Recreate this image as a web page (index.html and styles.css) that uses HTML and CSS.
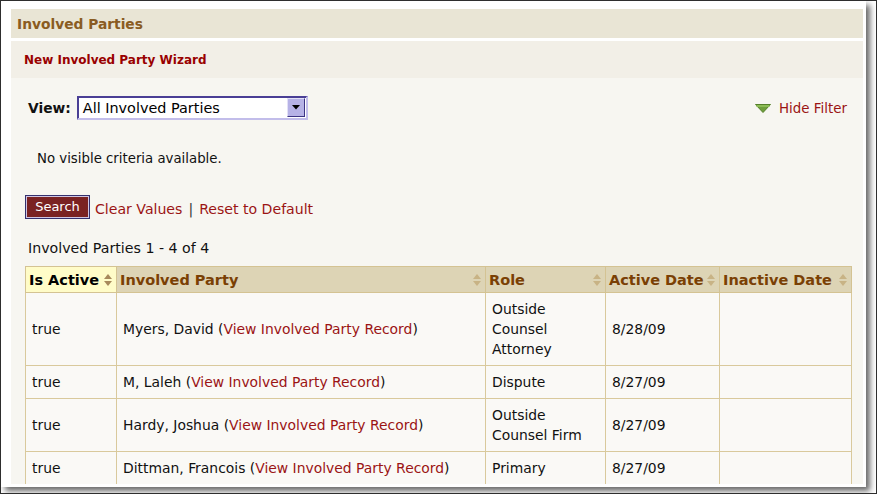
FILE: index.html
```html
<!DOCTYPE html>
<html>
<head>
<meta charset="utf-8">
<link rel="stylesheet" href="styles.css">
</head>
<body>
<div class="frame">
  <div class="panel">
    <div class="content">
      <div class="title">Involved Parties</div>
      <div class="wizard">New Involved Party Wizard</div>
      <div class="main">
        <div class="view-row">
          <div class="view-left">
            <span class="view-label">View:</span>
            <div class="select">
              <span class="select-text">All Involved Parties</span>
              <span class="select-btn"><svg width="8" height="5" viewBox="0 0 8 5"><polygon points="0,0 8,0 4,4.5" fill="#000"/></svg></span>
            </div>
          </div>
          <div class="hide-filter">
            <svg class="tri" width="16" height="9" viewBox="0 0 16 9"><polygon points="0.5,0.5 15.5,0.5 8,8.5" fill="#6f9f3c" stroke="#557f2a" stroke-width="1"/><rect x="1.5" y="1" width="13" height="2" fill="#8cbc55"/></svg>
            <a class="link">Hide Filter</a>
          </div>
        </div>
        <div class="criteria">No visible criteria available.</div>
        <div class="search-row">
          <button class="search-btn">Search</button>
          <a class="link">Clear Values</a><span class="sep">|</span><a class="link">Reset to Default</a>
        </div>
        <div class="count">Involved Parties 1 - 4 of 4</div>
        <table class="grid">
          <colgroup>
            <col class="c1"><col class="c2"><col class="c3"><col class="c4"><col class="c5">
          </colgroup>
          <thead>
            <tr>
              <th class="sorted"><div class="th-in"><span>Is Active</span><svg class="sort" width="8" height="12" viewBox="0 0 8 12"><polygon points="4,0 8,5 0,5" /><polygon points="0,7 8,7 4,12" /></svg></div></th>
              <th><div class="th-in"><span>Involved Party</span><svg class="sort" width="8" height="12" viewBox="0 0 8 12"><polygon points="4,0 8,5 0,5" /><polygon points="0,7 8,7 4,12" /></svg></div></th>
              <th><div class="th-in"><span>Role</span><svg class="sort" width="8" height="12" viewBox="0 0 8 12"><polygon points="4,0 8,5 0,5" /><polygon points="0,7 8,7 4,12" /></svg></div></th>
              <th><div class="th-in"><span>Active Date</span><svg class="sort" width="8" height="12" viewBox="0 0 8 12"><polygon points="4,0 8,5 0,5" /><polygon points="0,7 8,7 4,12" /></svg></div></th>
              <th><div class="th-in"><span>Inactive Date</span><svg class="sort" width="8" height="12" viewBox="0 0 8 12"><polygon points="4,0 8,5 0,5" /><polygon points="0,7 8,7 4,12" /></svg></div></th>
            </tr>
          </thead>
          <tbody>
            <tr>
              <td>true</td>
              <td>Myers, David (<a class="link">View Involved Party Record</a>)</td>
              <td>Outside Counsel Attorney</td>
              <td>8/28/09</td>
              <td></td>
            </tr>
            <tr>
              <td>true</td>
              <td>M, Laleh (<a class="link">View Involved Party Record</a>)</td>
              <td>Dispute</td>
              <td>8/27/09</td>
              <td></td>
            </tr>
            <tr>
              <td>true</td>
              <td>Hardy, Joshua (<a class="link">View Involved Party Record</a>)</td>
              <td>Outside Counsel Firm</td>
              <td>8/27/09</td>
              <td></td>
            </tr>
            <tr>
              <td>true</td>
              <td>Dittman, Francois (<a class="link">View Involved Party Record</a>)</td>
              <td>Primary</td>
              <td>8/27/09</td>
              <td></td>
            </tr>
          </tbody>
        </table>
      </div>
    </div>
  </div>
</div>
</body>
</html>
```

FILE: styles.css
```css
html, body {
  margin: 0;
  padding: 0;
  background: #ffffff;
}

body {
  font-family: "DejaVu Sans", Verdana, sans-serif;
  color: #111111;
  font-size: 14px;
}

.frame {
  width: 877px;
  height: 494px;
  box-sizing: border-box;
  border: 1px solid #2e2e2e;
  background: #ffffff;
  overflow: hidden;
}

.panel {
  width: 865px;
  height: 486px;
  box-sizing: border-box;
  padding: 8px 3px 3px 10px;
  background: #ffffff;
  box-shadow: 4px 4px 6px rgba(0, 0, 0, 0.6);
}

.content {
  width: 852px;
  height: 475px;
  display: flex;
  flex-direction: column;
  overflow: hidden;
}

.title {
  height: 29px;
  flex: none;
  display: flex;
  align-items: center;
  padding-left: 6px;
  background: #e9e5d5;
  color: #8a5c22;
  font-weight: bold;
  font-size: 13.8px;
}

.wizard {
  margin-top: 3px;
  height: 37px;
  flex: none;
  display: flex;
  align-items: center;
  padding-left: 13px;
  background: #f2efe7;
  color: #990000;
  font-weight: bold;
  font-size: 12px;
}

.main {
  flex: 1;
  background: #f7f6f1;
  padding: 0 12px 0 14px;
}

.view-row {
  margin-top: 18px;
  height: 24px;
  display: flex;
  align-items: center;
  justify-content: space-between;
}

.view-left {
  display: flex;
  align-items: center;
  padding-left: 3px;
}

.view-label {
  font-weight: bold;
  font-size: 13.8px;
  margin-right: 6px;
}

.select {
  width: 231px;
  height: 24px;
  box-sizing: border-box;
  border: 1px solid #4a3f95;
  border-bottom: 2px solid #c2bdea;
  border-right: 2px solid #c2bdea;
  box-shadow: inset 1px 1px 0 #4a3f95;
  background: #ffffff;
  display: flex;
  align-items: center;
  justify-content: space-between;
  padding: 0 1px 0 5px;
}

.select-text {
  font-size: 14.4px;
  color: #000000;
}

.select-btn {
  width: 18px;
  height: 19px;
  box-sizing: border-box;
  background: #b6b2e6;
  border: 1px solid #3c3483;
  border-top-color: #e2e0f7;
  border-left-color: #e2e0f7;
  display: flex;
  align-items: center;
  justify-content: center;
}

.hide-filter {
  display: flex;
  align-items: center;
  padding-right: 4px;
}

.hide-filter .tri {
  margin-right: 8px;
}

.hide-filter .link {
  font-size: 13.4px;
}

.link {
  color: #9b1414;
  text-decoration: none;
}

.criteria {
  margin-top: 29px;
  line-height: 20px;
  padding-left: 12px;
  font-size: 13.3px;
}

.search-row {
  margin-top: 26px;
  height: 24px;
  display: flex;
  align-items: center;
  font-size: 14.1px;
}

.search-btn {
  width: 65px;
  height: 24px;
  box-sizing: border-box;
  border: 1px solid #34306e;
  box-shadow: inset 0 0 0 1px #cfc6e3;
  background: #7a2222;
  color: #ffffff;
  font-family: "DejaVu Sans", Verdana, sans-serif;
  font-size: 13px;
  padding: 0 0 2px 0;
  margin-right: 5px;
}

.search-row .link {
  margin-top: 4px;
}

.sep {
  margin: 4px 6px 0 6px;
  color: #333333;
}

.count {
  margin-top: 19px;
  line-height: 20px;
  padding-left: 3px;
  font-size: 14.2px;
}

.grid {
  margin-top: 8px;
  width: 826px;
  table-layout: fixed;
  border-collapse: collapse;
  background: #faf9f6;
}

.c1 { width: 91px; }
.c2 { width: 369px; }
.c3 { width: 120px; }
.c4 { width: 114px; }
.c5 { width: 132px; }

.grid th {
  height: 25px;
  padding: 0 4px 0 3px;
  background: #ddd4b5;
  border: 1px solid #d4c393;
  text-align: left;
  font-size: 14.5px;
  color: #7a4004;
  white-space: nowrap;
}

.grid th.sorted {
  background: #fffcc8;
  color: #000000;
}

.th-in {
  display: flex;
  align-items: center;
  justify-content: space-between;
}

.sort {
  fill: #c8b385;
  flex: none;
}

.sorted .sort {
  fill: #a88a5c;
}

.grid td {
  padding: 6px 7px 6px 6px;
  line-height: 20px;
  font-size: 13.9px;
  border: 1px solid #d9c99c;
  vertical-align: middle;
}
```
